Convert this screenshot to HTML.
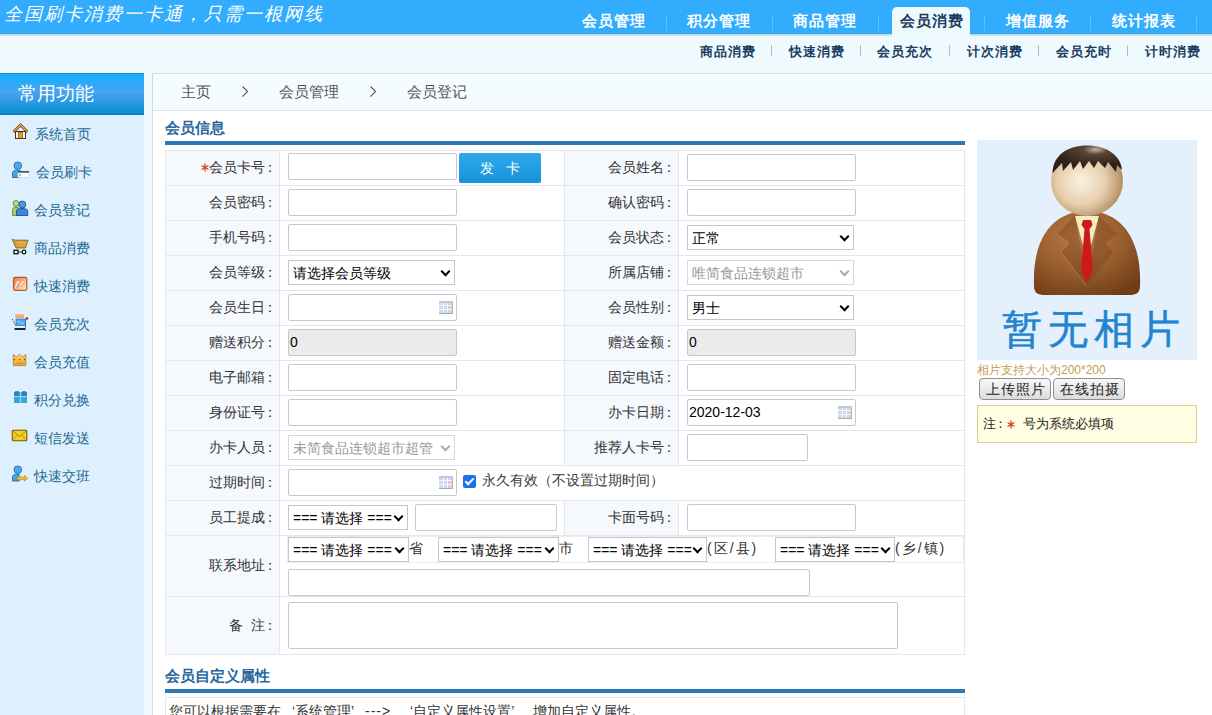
<!DOCTYPE html>
<html><head><meta charset="utf-8">
<style>
*{box-sizing:border-box;margin:0;padding:0}
html,body{width:1212px;height:715px;overflow:hidden}
body{position:relative;background:#effaff;font-family:"Liberation Sans",sans-serif;font-size:14px;color:#333}
.a{position:absolute}
#hdr{left:0;top:0;width:1212px;height:36px;background:linear-gradient(#32acfd 0,#32acfd 33px,#3aa2e2 33px,#3aa2e2 34px,#b8dcf0 34px,#b8dcf0 35px,#d5e2e6 35px)}
#slogan{left:4px;top:3px;color:#fff;font-size:18px;line-height:22px;font-style:italic;letter-spacing:2px;white-space:nowrap}
.nav{top:12px;color:#fff;font-size:15px;font-weight:bold;white-space:nowrap;line-height:18px;letter-spacing:1px}
.nsep{top:16px;width:1px;height:15px;background:#62c0f8}
#act{left:892px;top:7px;width:78px;height:29px;background:#eef9fe;border-radius:5px 5px 0 0}
.sub{top:44px;color:#1b3c60;font-size:13px;font-weight:bold;white-space:nowrap;line-height:16px;letter-spacing:1px}
.ssep{top:45px;width:1px;height:11px;background:#b0bcc8}
#side{left:0;top:73px;width:144px;height:642px;background:#def0fe}
#sideh{left:0;top:73px;width:144px;height:42px;background:linear-gradient(#2a8ab8 0,#2a8ab8 1px,#1aaefc 1px,#1aaefc 4px,#48a4f0 45%,#0a90d0 40px,#1a7ab0 41px);color:#fff;font-size:19px;line-height:41px;padding-left:18px;letter-spacing:0}
.si{left:35px;color:#1c6892;font-size:14px;line-height:16px;white-space:nowrap}
.ic{left:12px;width:17px;height:17px}
#main{left:152px;top:73px;width:1060px;height:642px;background:#fff;border-left:1px solid #d5d9de;border-top:1px solid #d8dde0}
#crumb{left:153px;top:74px;width:1059px;height:37px;background:#f4fcff;border-bottom:1px solid #dfe3e6}
.cr{top:83px;color:#555;font-size:15px;line-height:18px;white-space:nowrap}
.h2{left:165px;color:#28659e;font-size:15px;font-weight:bold;line-height:18px;white-space:nowrap}
.bar{left:165px;width:800px;height:4px;background:#2a78b5}
table.f{position:absolute;left:165px;top:150px;width:800px;border-collapse:separate;border-spacing:0;table-layout:fixed;border-top:1px solid #e3e6ea;border-left:1px solid #e3e6ea}
table.f td{border-right:1px solid #e3e6ea;border-bottom:1px solid #e3e6ea;height:35px;vertical-align:middle;padding:0}
td.l{background:#f5f9fe;text-align:right;padding-right:0;color:#333;white-space:nowrap}
td.v{background:#fff;padding-left:8px !important;white-space:nowrap}
.in{width:169px;height:27px;border:1px solid #c8c8c8;border-radius:2px;background:#fff;font-size:14px;line-height:25px;padding-left:1px;color:#000}
.dis{background:#ebebeb}
.sel{width:167px;height:25px;border:1px solid #c6c6c6;background:#fff;font-size:14px;line-height:22px;padding-top:1px;padding-left:4px;color:#000;overflow:hidden;white-space:nowrap}
.sel:after{content:"";position:absolute;right:5px;top:7px;width:5px;height:5px;border-right:2px solid #000;border-bottom:2px solid #000;transform:rotate(45deg)}
.seld{color:#999;border-color:#d8d8d8}
.seld:after{border-color:#aaa}
.cal{position:absolute;right:3px;top:6px;width:14px;height:13px}
.rel{position:relative}
.btn{width:82px;height:30px;border-radius:2px;background:linear-gradient(#2fa9ee,#1791d8);color:#fff;text-align:center;line-height:30px;font-size:14px}
.chk{width:13px;height:13px;border-radius:2px;background:#1a73e8}
.chk:after{content:"";position:absolute;left:4px;top:1px;width:3px;height:7px;border-right:2px solid #fff;border-bottom:2px solid #fff;transform:rotate(45deg)}
.ct{white-space:nowrap;line-height:18px;font-size:14px;color:#333}
table.addr{border-collapse:collapse}
table.addr td{border:1px solid #ececec;height:26px;padding:0;vertical-align:middle;white-space:nowrap}
table.addr td.t{color:#333;font-size:14px;vertical-align:top}
.s2{width:120px;height:25px}
.pbtn{width:72px;height:22px;border:1px solid #8f8f8f;border-radius:4px;background:linear-gradient(#f8f8f8,#dcdcdc);font-size:14px;line-height:20px;text-align:center;color:#222;white-space:nowrap;letter-spacing:1px;text-indent:1px}
.req{color:#e8461e}
.at{font-size:14px;line-height:20px;color:#333;padding-left:0;padding-top:2px;white-space:nowrap}
.q{display:inline-block}
.cl{position:relative;left:-2px}
</style></head><body>
<div id="hdr" class="a"></div>
<div id="slogan" class="a">全国刷卡消费一卡通，只需一根网线</div>
<div id="act" class="a"></div>
<div class="a nav" style="left:582px">会员管理</div>
<div class="a nsep" style="left:666px"></div>
<div class="a nav" style="left:687px">积分管理</div>
<div class="a nsep" style="left:772px"></div>
<div class="a nav" style="left:793px">商品管理</div>
<div class="a nsep" style="left:878px"></div>
<div class="a nav" style="left:900px;color:#1a3b5e">会员消费</div>
<div class="a nsep" style="left:984px"></div>
<div class="a nav" style="left:1006px">增值服务</div>
<div class="a nsep" style="left:1090px"></div>
<div class="a nav" style="left:1112px">统计报表</div>
<div class="a nsep" style="left:1196px"></div>

<div class="a sub" style="left:700px">商品消费</div>
<div class="a ssep" style="left:771px"></div>
<div class="a sub" style="left:789px">快速消费</div>
<div class="a ssep" style="left:860px"></div>
<div class="a sub" style="left:877px">会员充次</div>
<div class="a ssep" style="left:949px"></div>
<div class="a sub" style="left:967px">计次消费</div>
<div class="a ssep" style="left:1038px"></div>
<div class="a sub" style="left:1056px">会员充时</div>
<div class="a ssep" style="left:1127px"></div>
<div class="a sub" style="left:1145px">计时消费</div>

<div id="side" class="a"></div>
<div id="sideh" class="a">常用功能</div>
<div class="a si" style="left:35px;top:126px">系统首页</div>
<div class="a si" style="left:36px;top:164px">会员刷卡</div>
<div class="a si" style="left:34px;top:202px">会员登记</div>
<div class="a si" style="left:34px;top:240px">商品消费</div>
<div class="a si" style="left:34px;top:278px">快速消费</div>
<div class="a si" style="left:34px;top:316px">会员充次</div>
<div class="a si" style="left:34px;top:354px">会员充值</div>
<div class="a si" style="left:34px;top:392px">积分兑换</div>
<div class="a si" style="left:34px;top:430px">短信发送</div>
<div class="a si" style="left:34px;top:468px">快速交班</div>


<svg class="a" style="left:8px;top:118px" width="26" height="26" viewBox="0 0 26 26"><path d="M5.5 14 L12.5 6.8 L19.5 14" fill="none" stroke="#5a3a20" stroke-width="2.6" stroke-linejoin="miter"/><path d="M5.5 14 L12.5 6.8 L19.5 14" fill="none" stroke="#f6a040" stroke-width="1.3"/><rect x="7.5" y="13.5" width="10" height="7" fill="#fff8e8" stroke="#3a3030" stroke-width="1"/><rect x="10.3" y="14.2" width="4.2" height="6" fill="#f39a2a" stroke="#6a4020" stroke-width="0.6"/></svg>
<svg class="a" style="left:8px;top:156px" width="26" height="26" viewBox="0 0 26 26"><path d="M4.5 21.5 L4.5 17 C4.5 15 6.5 14 9.5 14 L12 14 L12 21.5 Z" fill="#4aa4e0" stroke="#2a6aa8" stroke-width="0.9"/><circle cx="9.8" cy="9.7" r="3.8" fill="#48aaf0" stroke="#2a6aa8" stroke-width="0.9"/><rect x="10" y="15.2" width="11" height="6.3" fill="#fafcff" stroke="#c0ccd8" stroke-width="0.5"/><rect x="10" y="15.2" width="11" height="1.4" fill="#1e3a3a"/><rect x="11.3" y="18.3" width="1.5" height="1.5" fill="#7a8a8a"/></svg>
<svg class="a" style="left:8px;top:194px" width="26" height="26" viewBox="0 0 26 26"><circle cx="8" cy="9.5" r="3" fill="#b8d888" stroke="#6a8a3a" stroke-width="0.9"/><path d="M4.5 21.5 L4.5 15.5 C4.5 14 6 13.5 8 13.5 L10 13.5 L10 21.5 Z" fill="#a8cc70" stroke="#6a8a3a" stroke-width="0.9"/><path d="M8.5 21.5 L8.5 17 C8.5 15.3 10.5 14.5 14 14.5 C17.5 14.5 19.7 15.3 19.7 17 L19.7 21.5 Z" fill="#3a88d8" stroke="#1e4e90" stroke-width="0.9"/><circle cx="14.3" cy="10.6" r="3.5" fill="#4a98e0" stroke="#1e4e90" stroke-width="0.9"/></svg>
<svg class="a" style="left:8px;top:232px" width="26" height="26" viewBox="0 0 26 26"><path d="M4.2 7.3 L7 8.2 L20 8.2 L17.5 16 L8 16 Z" fill="#e8902a" stroke="#5a8a3a" stroke-width="1"/><path d="M8.5 10.5 H18.5 M9 13 H18" stroke="#f8c870" stroke-width="0.8"/><rect x="6" y="18.3" width="4" height="3.4" fill="#fff" stroke="#111" stroke-width="1.3"/><circle cx="16" cy="20" r="1.8" fill="#fff" stroke="#111" stroke-width="1.3"/><path d="M10 20 H14" stroke="#111" stroke-width="0.8"/></svg>
<svg class="a" style="left:8px;top:270px" width="26" height="26" viewBox="0 0 26 26"><defs><linearGradient id="g5" x1="0" y1="0" x2="1" y2="1"><stop offset="0" stop-color="#f07040"/><stop offset="1" stop-color="#fff0c0"/></linearGradient></defs><rect x="5.5" y="7.3" width="13.3" height="13" rx="1.5" fill="url(#g5)" stroke="#b05a30" stroke-width="1.2"/><path d="M7.5 17.5 L10 12 L12 16 L15.5 11.5" fill="none" stroke="#fff" stroke-width="1.5"/><path d="M8.5 17.5 L10.5 13 L12 16.5 L15.8 12.5" fill="none" stroke="#b06040" stroke-width="0.6"/></svg>
<svg class="a" style="left:8px;top:308px" width="26" height="26" viewBox="0 0 26 26"><rect x="7.5" y="6" width="8.5" height="4" fill="#f4a860"/><rect x="7.5" y="6" width="8.5" height="1.5" fill="#f8b8a0"/><path d="M4.3 11.2 L7.5 17.5" stroke="#223" stroke-width="1" stroke-dasharray="1 1"/><rect x="8" y="11" width="9.5" height="6.5" fill="#48aaf0" stroke="#3a70b0" stroke-width="0.7"/><path d="M9 13.3 L16 15.5" stroke="#a8d8ff" stroke-width="0.8"/><circle cx="19" cy="10.5" r="1.3" fill="#c01848"/><path d="M6.5 21 H17.5" stroke="#223" stroke-width="2"/><path d="M17.5 10.5 V21" stroke="#3a5a90" stroke-width="0.8"/></svg>
<svg class="a" style="left:8px;top:346px" width="26" height="26" viewBox="0 0 26 26"><defs><linearGradient id="g7" x1="0" y1="0" x2="0" y2="1"><stop offset="0" stop-color="#ffd878"/><stop offset="1" stop-color="#f0a020"/></linearGradient></defs><path d="M5.3 19.6 L5.3 8.5 L8.5 11 L11.5 8 L14.5 11 L17.8 8.5 L17.8 19.6 Z" fill="url(#g7)" stroke="#a87838" stroke-width="0.8"/><circle cx="6.5" cy="13.5" r="0.7" fill="#8a4a10"/><circle cx="11.5" cy="13.5" r="0.7" fill="#8a4a10"/><circle cx="16.5" cy="13.5" r="0.7" fill="#8a4a10"/><path d="M8.5 17.3 H14.5" stroke="#e07818" stroke-width="0.8"/></svg>
<svg class="a" style="left:8px;top:384px" width="26" height="26" viewBox="0 0 26 26"><rect x="6" y="8" width="13" height="11" rx="0.5" fill="#3aa2d8"/><rect x="6" y="8" width="13" height="4" fill="#2a88c0"/><rect x="6" y="12" width="13" height="1.2" fill="#8ad8fa"/><rect x="11.8" y="8" width="1.4" height="11" fill="#8ad8fa"/><rect x="7" y="7.3" width="4" height="1" fill="#2a70a8"/><rect x="14" y="7.3" width="4" height="1" fill="#2a70a8"/></svg>
<svg class="a" style="left:8px;top:422px" width="26" height="26" viewBox="0 0 26 26"><rect x="4.3" y="8.2" width="14.5" height="10.5" rx="1" fill="#f8d020" stroke="#6a5a10" stroke-width="1.1"/><path d="M5.2 9.2 L11.5 14.5 L17.8 9.2 M5.2 17.5 L9.5 13 M17.8 17.5 L13.5 13" fill="none" stroke="#9a6a10" stroke-width="0.7"/></svg>
<svg class="a" style="left:8px;top:460px" width="26" height="26" viewBox="0 0 26 26"><path d="M4.5 21 L4.5 17 C4.5 15 6.5 14 9.5 14 L11 14 L11 21 Z" fill="#4aa4e0" stroke="#2a6aa8" stroke-width="0.9"/><circle cx="9.8" cy="9.7" r="3.8" fill="#48aaf0" stroke="#2a6aa8" stroke-width="0.9"/><path d="M8.8 18.3 L11.8 15.5 L11.8 17 L16.5 17 L16.5 15.5 L19.8 18.3 L16.5 21 L16.5 19.6 L11.8 19.6 L11.8 21 Z" fill="#f8c020" stroke="#9a7a20" stroke-width="0.6"/></svg>
<div id="main" class="a"></div>
<div id="crumb" class="a"></div>
<div class="a cr" style="left:181px">主页</div>
<svg class="a" style="left:241px;top:85px" width="8" height="13" viewBox="0 0 8 13"><path d="M1.5 1.5 L6.6 6.5 L1.5 11.6" fill="none" stroke="#555" stroke-width="1.1"/></svg>
<div class="a cr" style="left:279px">会员管理</div>
<svg class="a" style="left:369px;top:85px" width="8" height="13" viewBox="0 0 8 13"><path d="M1.5 1.5 L6.6 6.5 L1.5 11.6" fill="none" stroke="#555" stroke-width="1.1"/></svg>
<div class="a cr" style="left:407px">会员登记</div>

<div class="a h2" style="top:119px">会员信息</div>
<div class="a bar" style="top:141px"></div>

<table class="f"><colgroup><col style="width:114px"><col style="width:285px"><col style="width:114px"><col style="width:286px"></colgroup>
<tr><td class="l" style="height:35px"><svg width="8" height="9" viewBox="0 0 8 9" style="display:inline-block;vertical-align:0px;margin-right:0px"><path d="M4 0.5 V8.5 M0.6 2.5 L7.4 6.5 M0.6 6.5 L7.4 2.5" stroke="#e03a1e" stroke-width="1.3"/></svg>会员卡号<span class="cl">：</span></td><td class="v"></td><td class="l">会员姓名<span class="cl">：</span></td><td class="v"></td></tr>
<tr><td class="l" style="height:35px">会员密码<span class="cl">：</span></td><td class="v"></td><td class="l">确认密码<span class="cl">：</span></td><td class="v"></td></tr>
<tr><td class="l" style="height:35px">手机号码<span class="cl">：</span></td><td class="v"></td><td class="l">会员状态<span class="cl">：</span></td><td class="v"></td></tr>
<tr><td class="l" style="height:35px">会员等级<span class="cl">：</span></td><td class="v"></td><td class="l">所属店铺<span class="cl">：</span></td><td class="v"></td></tr>
<tr><td class="l" style="height:35px">会员生日<span class="cl">：</span></td><td class="v"></td><td class="l">会员性别<span class="cl">：</span></td><td class="v"></td></tr>
<tr><td class="l" style="height:35px">赠送积分<span class="cl">：</span></td><td class="v"></td><td class="l">赠送金额<span class="cl">：</span></td><td class="v"></td></tr>
<tr><td class="l" style="height:35px">电子邮箱<span class="cl">：</span></td><td class="v"></td><td class="l">固定电话<span class="cl">：</span></td><td class="v"></td></tr>
<tr><td class="l" style="height:35px">身份证号<span class="cl">：</span></td><td class="v"></td><td class="l">办卡日期<span class="cl">：</span></td><td class="v"></td></tr>
<tr><td class="l" style="height:35px">办卡人员<span class="cl">：</span></td><td class="v"></td><td class="l">推荐人卡号<span class="cl">：</span></td><td class="v"></td></tr>
<tr><td class="l" style="height:35px">过期时间<span class="cl">：</span></td><td class="v" colspan="3"></td></tr>
<tr><td class="l" style="height:35px">员工提成<span class="cl">：</span></td><td class="v"></td><td class="l">卡面号码<span class="cl">：</span></td><td class="v"></td></tr>
<tr><td class="l" style="height:61px">联系地址<span class="cl">：</span></td><td class="v" colspan="3"></td></tr>
<tr><td class="l" style="height:58px">备&nbsp;&nbsp;注<span class="cl">：</span></td><td class="v" colspan="3"></td></tr>
</table>
<div class="a in " style="left:288px;top:153px;width:169px;height:27px"></div>
<div class="a btn" style="left:459px;top:153px">发<span style="margin-left:12px">卡</span></div>
<div class="a in " style="left:687px;top:154px;width:169px;height:27px"></div>
<div class="a in " style="left:288px;top:189px;width:169px;height:27px"></div>
<div class="a in " style="left:687px;top:189px;width:169px;height:27px"></div>
<div class="a in " style="left:288px;top:224px;width:169px;height:27px"></div>
<div class="a sel " style="left:687px;top:225px;width:167px">正常</div>
<div class="a sel " style="left:288px;top:260px;width:167px">请选择会员等级</div>
<div class="a sel seld" style="left:687px;top:260px;width:167px">唯简食品连锁超市</div>
<div class="a in " style="left:288px;top:294px;width:169px;height:27px"><svg class="cal" viewBox="0 0 14 13"><rect x="0" y="0" width="14" height="13" fill="#cdd8ee"/><rect x="0" y="0" width="14" height="2" fill="#c4c4dc"/><rect x="9" y="3" width="5" height="9" fill="#e6cccc"/><g fill="#f4f8ff"><rect x="0" y="4" width="14" height="1"/><rect x="0" y="8" width="14" height="1"/><rect x="4" y="2" width="1" height="10"/><rect x="8" y="2" width="1" height="10"/></g><rect x="0" y="12" width="14" height="1" fill="#a4acbc"/><rect x="13" y="2" width="1" height="11" fill="#a8b4cc"/></svg></div>
<div class="a sel " style="left:687px;top:295px;width:167px">男士</div>
<div class="a in dis" style="left:288px;top:329px;width:169px;height:27px">0</div>
<div class="a in dis" style="left:687px;top:329px;width:169px;height:27px">0</div>
<div class="a in " style="left:288px;top:364px;width:169px;height:27px"></div>
<div class="a in " style="left:687px;top:364px;width:169px;height:27px"></div>
<div class="a in " style="left:288px;top:399px;width:169px;height:27px"></div>
<div class="a in " style="left:687px;top:399px;width:169px;height:27px">2020-12-03<svg class="cal" viewBox="0 0 14 13"><rect x="0" y="0" width="14" height="13" fill="#cdd8ee"/><rect x="0" y="0" width="14" height="2" fill="#c4c4dc"/><rect x="9" y="3" width="5" height="9" fill="#e6cccc"/><g fill="#f4f8ff"><rect x="0" y="4" width="14" height="1"/><rect x="0" y="8" width="14" height="1"/><rect x="4" y="2" width="1" height="10"/><rect x="8" y="2" width="1" height="10"/></g><rect x="0" y="12" width="14" height="1" fill="#a4acbc"/><rect x="13" y="2" width="1" height="11" fill="#a8b4cc"/></svg></div>
<div class="a sel seld" style="left:288px;top:435px;width:167px">未简食品连锁超市超管</div>
<div class="a in " style="left:687px;top:434px;width:121px;height:27px"></div>
<div class="a in " style="left:288px;top:469px;width:169px;height:27px"><svg class="cal" viewBox="0 0 14 13"><rect x="0" y="0" width="14" height="13" fill="#cdd8ee"/><rect x="0" y="0" width="14" height="2" fill="#c4c4dc"/><rect x="9" y="3" width="5" height="9" fill="#e6cccc"/><g fill="#f4f8ff"><rect x="0" y="4" width="14" height="1"/><rect x="0" y="8" width="14" height="1"/><rect x="4" y="2" width="1" height="10"/><rect x="8" y="2" width="1" height="10"/></g><rect x="0" y="12" width="14" height="1" fill="#a4acbc"/><rect x="13" y="2" width="1" height="11" fill="#a8b4cc"/></svg></div>
<div class="a chk" style="left:463px;top:475px"></div><div class="a ct" style="left:482px;top:471px;color:#3a3a3a">永久有效（不设置过期时间）</div>
<div class="a sel " style="left:288px;top:505px;width:120px">=== 请选择 ===</div>
<div class="a in " style="left:415px;top:504px;width:142px;height:27px"></div>
<div class="a in " style="left:687px;top:504px;width:169px;height:27px"></div>
<div class="a" style="left:287px;top:536px;width:677px;height:27px;border:1px solid #ececec;border-right:0"></div>
<div class="a sel s2" style="left:288px;top:537px;width:121px">=== 请选择 ===</div>
<div class="a at" style="left:409px;top:536px;width:30px;height:27px;border-right:1px solid #ececec">省</div>
<div class="a sel s2" style="left:438px;top:537px;width:121px">=== 请选择 ===</div>
<div class="a at" style="left:559px;top:536px;width:30px;height:27px;border-right:1px solid #ececec">市</div>
<div class="a sel s2" style="left:588px;top:537px;width:119px">=== 请选择 ===</div>
<div class="a at" style="left:707px;top:536px;width:69px;height:27px;border-right:1px solid #ececec;letter-spacing:2px">(区/县)</div>
<div class="a sel s2" style="left:775px;top:537px;width:120px">=== 请选择 ===</div>
<div class="a at" style="left:895px;top:536px;width:69px;height:27px;border-right:1px solid #ececec;letter-spacing:2px">(乡/镇)</div>
<div class="a in " style="left:288px;top:569px;width:522px;height:27px"></div>
<div class="a in " style="left:288px;top:602px;width:610px;height:47px"></div>



<div class="a" style="left:977px;top:140px;width:220px;height:220px;background:#e4f1fc">
<svg width="220" height="220" viewBox="0 0 220 220" style="position:absolute;left:0;top:0">
<defs>
<radialGradient id="suit" cx="0.42" cy="0.3" r="0.8"><stop offset="0" stop-color="#b67b46"/><stop offset="0.5" stop-color="#9a5f2e"/><stop offset="1" stop-color="#6e3c16"/></radialGradient>
<radialGradient id="face" cx="0.42" cy="0.5" r="0.62"><stop offset="0" stop-color="#fbf2e2"/><stop offset="0.55" stop-color="#e6ceac"/><stop offset="1" stop-color="#a98258"/></radialGradient>
<radialGradient id="hair" cx="0.62" cy="0.15" r="0.6"><stop offset="0" stop-color="#c0b0a0"/><stop offset="0.3" stop-color="#5a4434"/><stop offset="1" stop-color="#2e2018"/></radialGradient>
</defs>
<path d="M57 146 C55 96 78 71 110 71 C142 71 165 96 163 146 C163 153 159 155 152 155 L68 155 C61 155 57 153 57 146 Z" fill="url(#suit)"/>
<path d="M98 76 L110 120 L122 76 Z" fill="#f6ecc0"/>
<path d="M98 76 L80 94 L92 103 L84 112 L110 147 L104 110 Z" fill="#7a4420" opacity="0.4"/>
<path d="M122 76 L140 94 L128 103 L136 112 L110 147 L116 110 Z" fill="#7a4420" opacity="0.4"/>
<path d="M80 94 L92 103 L84 112 L110 147" fill="none" stroke="#c89060" stroke-width="1" opacity="0.6"/>
<path d="M106 80 L114 80 L115.5 85 L112.5 89 L116 130 L110 143 L104 130 L107.5 89 L104.5 85 Z" fill="#cc1a1a"/>
<ellipse cx="110" cy="41" rx="36" ry="35" fill="url(#face)"/>
<path d="M75.5 33 C76 15 91 5.5 110 5.5 C129 5.5 144 15 145 30 L140 25 L139 32 L131 22 L128 28 L121 21 L117 28 L112 21 L106 29 L103 21 L96 30 L94 22 L86 31 L85 23 Z" fill="url(#hair)"/>
</svg>
<div style="position:absolute;left:25px;top:168px;width:200px;color:#2184d0;-webkit-text-stroke:0.5px #2184d0;font-size:40px;line-height:42px;letter-spacing:6px;white-space:nowrap">暂无相片</div>
</div>
<div class="a" style="left:977px;top:363px;color:#c89a58;font-size:12px;line-height:14px;white-space:nowrap">相片支持大小为200*200</div>
<div class="a pbtn" style="left:979px;top:378px">上传照片</div>
<div class="a pbtn" style="left:1053px;top:378px">在线拍摄</div>
<div class="a" style="left:977px;top:405px;width:220px;height:38px;background:#fffde2;border:1px solid #dccf8e;font-size:13px;line-height:36px;padding-left:5px;color:#222;white-space:nowrap">注<span class="cl">：</span><svg width="8" height="9" viewBox="0 0 8 9" style="display:inline-block;vertical-align:-1px;margin-left:-2px;margin-right:8px"><path d="M4 0.5 V8.5 M0.6 2.5 L7.4 6.5 M0.6 6.5 L7.4 2.5" stroke="#e03a1e" stroke-width="1.3"/></svg>号为系统必填项</div>

<div class="a h2" style="top:667px">会员自定义属性</div>
<div class="a bar" style="top:689px"></div>
<div class="a" style="left:165px;top:697px;width:800px;height:40px;border:1px solid #e3e6ea;background:#fff;padding:5px 0 0 3px;font-size:14px;line-height:16px;color:#333;white-space:nowrap">您可以根据需要在<span class="q" style="width:14px;text-align:right">‘</span>系统管理<span class="q" style="width:14px">’</span><span style="letter-spacing:1px">---&gt;</span><span class="q" style="width:22px;text-align:right">‘</span>自定义属性设置<span class="q" style="width:22px">’</span>增加自定义属性。</div>
</body></html>
